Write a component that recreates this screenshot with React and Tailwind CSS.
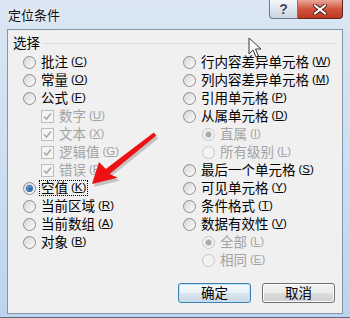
import React from 'react'

const cjk = { fontFamily: '"Noto Sans CJK SC", "Noto Sans", sans-serif' }

const leftRows = [
  { label: '批注', acc: 'C' },
  { label: '常量', acc: 'O' },
  { label: '公式', acc: 'F' },
  { label: '数字', acc: 'U', kind: 'check', sub: true, disabled: true, checked: true },
  { label: '文本', acc: 'X', kind: 'check', sub: true, disabled: true, checked: true },
  { label: '逻辑值', acc: 'G', kind: 'check', sub: true, disabled: true, checked: true },
  { label: '错误', acc: 'E', kind: 'check', sub: true, disabled: true, checked: true },
  { label: '空值', acc: 'K', checked: true, focus: true },
  { label: '当前区域', acc: 'R' },
  { label: '当前数组', acc: 'A' },
  { label: '对象', acc: 'B' },
]

const rightRows = [
  { label: '行内容差异单元格', acc: 'W' },
  { label: '列内容差异单元格', acc: 'M' },
  { label: '引用单元格', acc: 'P' },
  { label: '从属单元格', acc: 'D' },
  { label: '直属', acc: 'I', sub: true, disabled: true, checked: true },
  { label: '所有级别', acc: 'L', sub: true, disabled: true },
  { label: '最后一个单元格', acc: 'S' },
  { label: '可见单元格', acc: 'Y' },
  { label: '条件格式', acc: 'T' },
  { label: '数据有效性', acc: 'V' },
  { label: '全部', acc: 'L', sub: true, disabled: true, checked: true },
  { label: '相同', acc: 'E', sub: true, disabled: true },
]

function Radio({ checked, disabled }) {
  return (
    <span
      className={`flex h-[13px] w-[13px] shrink-0 items-center justify-center rounded-full border ${
        disabled
          ? 'border-[#c6c6c6] bg-[#f3f3f3]'
          : 'border-[#8c8c8c] bg-linear-to-br from-[#d6d6d6] to-[#fcfcfc]'
      }`}
    >
      {checked && (
        <span
          className={`h-[5px] w-[5px] rounded-full ${
            disabled
              ? 'bg-[#a8a8a8] ring-1 ring-[#d0d0d0]'
              : 'bg-linear-to-br from-[#5fa4e6] to-[#0e4a94] ring-1 ring-[#2f6bb0]'
          }`}
        />
      )}
    </span>
  )
}

function Check() {
  return (
    <span className="flex h-[13px] w-[13px] shrink-0 items-center justify-center border border-[#bdbdbd] bg-[#f4f4f4]">
      <svg width="9" height="9" viewBox="0 0 9 9">
        <path d="M1 4.5 L3.5 7 L8 1.5" fill="none" stroke="#a9a9a9" strokeWidth="1.6" />
      </svg>
    </span>
  )
}

function Row({ row, indent }) {
  return (
    <div className={`flex h-[18px] items-center ${row.sub ? indent : ''}`}>
      {row.kind === 'check' ? <Check /> : <Radio checked={row.checked} disabled={row.disabled} />}
      <span
        className={`ml-[3px] flex h-[16px] items-center whitespace-nowrap leading-none ${
          row.disabled ? 'text-[#a3a3a3]' : 'text-black'
        } ${row.focus ? 'border border-dotted border-black px-[1px]' : 'border border-transparent px-[1px]'}`}
      >
        <span className="text-[13.5px] leading-none" style={cjk}>
          {row.label}
        </span>
        <span className="ml-[3px] text-[11.5px] leading-none" style={{ fontFamily: '"Liberation Sans", sans-serif' }}>
          (<u>{row.acc}</u>)
        </span>
      </span>
    </div>
  )
}

export default function App() {
  return (
    <div className="relative flex h-[318px] w-[350px] flex-col overflow-hidden bg-linear-to-b from-[#dae6f3] via-[#cddff1] to-[#bcd4ee] border-b border-[#5d6b7a]">
      {/* title bar */}
      <div className="flex h-[29px] shrink-0 items-start justify-between">
        <span
          className="mt-[8px] ml-[8px] text-[13px] leading-none text-[#111] [text-shadow:0_0_6px_#ffffff]"
          style={cjk}
        >
          定位条件
        </span>
        <div className="mr-[7px] flex">
          <div className="flex h-[19px] w-[29px] items-center justify-center rounded-bl-[4px] border border-t-0 border-[#6d7b8b] bg-linear-to-b from-[#f4f7fa] via-[#dfe6ee] to-[#c9d4e0]">
            <span
              className="text-[14px] font-bold leading-none text-[#3d4651] [text-shadow:0_0_2px_#ffffff]"
              style={{ fontFamily: '"Liberation Sans", sans-serif' }}
            >
              ?
            </span>
          </div>
          <div className="flex h-[19px] w-[45px] items-center justify-center rounded-br-[4px] border border-l-0 border-t-0 border-[#5b2a22] bg-linear-to-b from-[#e9a797] via-[#d2523c] to-[#c2361f]">
            <svg width="14" height="11" viewBox="0 0 14 11">
              <path d="M2 1.5 L12 9.5 M12 1.5 L2 9.5" stroke="#4a2019" strokeWidth="4" strokeLinecap="round" />
              <path d="M2 1.5 L12 9.5 M12 1.5 L2 9.5" stroke="#ffffff" strokeWidth="2.2" strokeLinecap="round" />
            </svg>
          </div>
        </div>
      </div>

      {/* client */}
      <div className="ml-[7px] mr-[7px] h-[285px] shrink-0 border border-[#8495a8] bg-[#f0f0f0]">
        <div className="flex h-[23px] items-center pt-[3px] pl-[5px]">
          <span className="text-[13.5px] leading-none text-black" style={cjk}>
            选择
          </span>
          <span className="ml-[3px] mr-[5px] h-px flex-1 bg-[#d5dfe5]" />
        </div>

        <div className="grid grid-cols-[160px_1fr] items-start pl-[15px]">
          <div className="flex flex-col">
            {leftRows.map((r, i) => (
              <Row key={i} row={r} indent="ml-[18px]" />
            ))}
          </div>
          <div className="flex flex-col">
            {rightRows.map((r, i) => (
              <Row key={i} row={r} indent="ml-[19px]" />
            ))}
          </div>
        </div>

        <div className="mt-[14px] flex justify-end gap-[11px] pr-[7px]">
          <button className="flex h-[20px] w-[73px] items-center justify-center rounded-[3px] border border-[#3c7fb1] bg-[linear-gradient(#f4f9fc_0%,#e9f1f7_50%,#d9e4ee_50%,#cbd9e6_100%)] shadow-[inset_0_0_0_1px_#c0e4f8]">
            <span className="text-[13.5px] leading-none text-black" style={cjk}>
              确定
            </span>
          </button>
          <button className="flex h-[20px] w-[73px] items-center justify-center rounded-[3px] border border-[#707070] bg-[linear-gradient(#f2f2f2_0%,#ebebeb_50%,#dddddd_50%,#cfcfcf_100%)] shadow-[inset_0_0_0_1px_#fcfcfc]">
            <span className="text-[13.5px] leading-none text-black" style={cjk}>
              取消
            </span>
          </button>
        </div>
      </div>

      {/* red arrow annotation */}
      <svg className="pointer-events-none absolute left-0 top-0" width="350" height="318" viewBox="0 0 350 318">
        <polygon
          points="94,187 101,165 107.8,171 155.8,135.5 158.3,138.6 111.6,176 119.8,180.7"
          fill="#6d6d6d"
          opacity="0.35"
        />
        <polygon
          points="92,184 99,162 105.8,169 153.8,132.5 156.3,135.6 109.6,173.9 117.8,177.7"
          fill="#ee1111"
        />
      </svg>

      {/* mouse cursor */}
      <svg className="pointer-events-none absolute left-[248px] top-[37px]" width="16" height="22" viewBox="0 0 16 22">
        <path
          d="M1 1 L1 17 L5 13 L8 20 L10.5 19 L7.5 12 L13 12 Z"
          fill="#ffffff"
          stroke="#1a1a1a"
          strokeWidth="1"
          strokeLinejoin="round"
          opacity="0.85"
        />
      </svg>
    </div>
  )
}
